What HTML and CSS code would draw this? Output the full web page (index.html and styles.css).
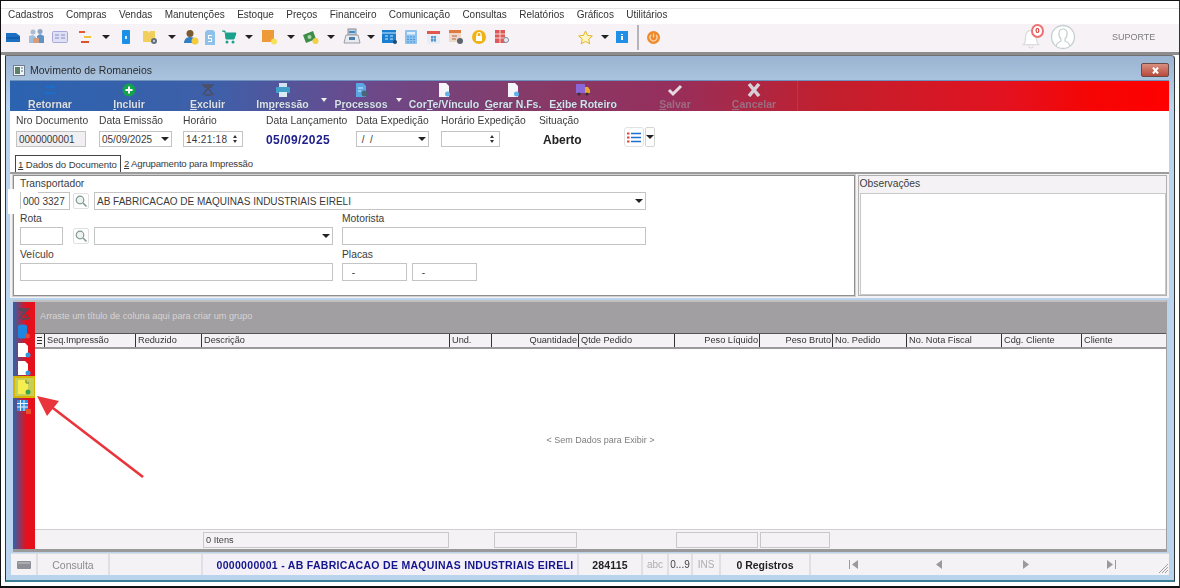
FILE: index.html
```html
<!DOCTYPE html>
<html lang="pt-BR">
<head>
    <meta charset="UTF-8">
    <title>Movimento de Romaneios</title>
    <link rel="stylesheet" href="styles.css">
</head>
<body>
<div class="screen">
    <nav class="menu">
        <span>Cadastros</span><span>Compras</span><span>Vendas</span><span>Manutenções</span><span>Estoque</span><span>Preços</span><span>Financeiro</span><span>Comunicação</span><span>Consultas</span><span>Relatórios</span><span>Gráficos</span><span>Utilitários</span>
    </nav>

    <div class="toolbar">
        <i class="tb"><svg width="16" height="16" viewBox="0 0 16 16"><path d="M-3 4h13l4 3v6H-3z" fill="#1b70c4"/><path d="M-3 9h17" stroke="#0d4f96"/></svg></i>
        <i class="tb"><svg width="18" height="18" viewBox="0 0 18 18"><circle cx="5" cy="4" r="2.5" fill="#a9bcd2"/><circle cx="12" cy="3.5" r="2.5" fill="#8aa6c4"/><path d="M1 15V8l4-1 3 2v6z" fill="#9fc0dd"/><path d="M9 15V8l3-2 4 2v7z" fill="#5e93c8"/><rect x="5" y="10" width="6" height="5" fill="#d99a78"/></svg></i>
        <i class="tb"><svg width="16" height="14" viewBox="0 0 16 14"><rect x=".5" y="1.5" width="15" height="11" rx="1" fill="#dfe0f4" stroke="#a8aadc"/><path d="M3 5h4M3 8h4M9 5h4M9 8h4" stroke="#8a8cd0"/></svg></i>
        <i class="tb"><svg width="14" height="16" viewBox="0 0 14 16"><path d="M1 2h6v2H1z" fill="#e8572e"/><path d="M6 7h7v2H6z" fill="#f1c232"/><path d="M3 12h8v2H3z" fill="#d9542a"/></svg></i>
        <i class="tb caret"></i>
        <i class="tb"><svg width="10" height="16" viewBox="0 0 10 16"><rect x="1" y="1" width="8" height="14" rx="1" fill="#1c8fe6"/><path d="M4 7h2v3H4z" fill="#d5ecff"/></svg></i>
        <i class="tb"><svg width="18" height="16" viewBox="0 0 18 16"><path d="M2 2h5l1 2 1-2h5v11H2z" fill="#f0cf5e"/><circle cx="13" cy="12" r="3" fill="#62707e"/><circle cx="13" cy="12" r="1" fill="#dfe5ea"/></svg></i>
        <i class="tb caret"></i>
        <i class="tb"><svg width="16" height="16" viewBox="0 0 16 16"><circle cx="7" cy="4.5" r="3.5" fill="#7a5a32"/><path d="M1 14c0-4 3-6 6-6s5 1 5 3v3z" fill="#2f7fc2"/><circle cx="12" cy="12" r="3.5" fill="#f3cc3e"/></svg></i>
        <i class="tb"><svg width="14" height="17" viewBox="0 0 14 17"><path d="M2 3l2-2h6l2 2v13H2z" fill="#8fc1ea"/><path d="M5 6h4v1H6v2h3v4H5v-1h3v-2H5z" fill="#fff"/></svg></i>
        <i class="tb"><svg width="17" height="16" viewBox="0 0 17 16"><path d="M1 2h3l1 8h8l2-6H5" fill="#1aa28d" stroke="#1aa28d"/><circle cx="6" cy="13" r="1.5" fill="#1aa28d"/><circle cx="12" cy="13" r="1.5" fill="#1aa28d"/></svg></i>
        <i class="tb caret"></i>
        <i class="tb"><svg width="17" height="16" viewBox="0 0 17 16"><rect x="1" y="1" width="12" height="12" fill="#ee9a36"/><circle cx="13" cy="12.500" r="3" fill="#f5e15a"/></svg></i>
        <i class="tb caret"></i>
        <i class="tb"><svg width="18" height="16" viewBox="0 0 18 16"><path d="M1 6l10-4 3 8-10 4z" fill="#3f8c4a"/><circle cx="7.500" cy="8" r="2" fill="#a6d9a4"/><circle cx="13.500" cy="12" r="3" fill="#f0d044"/></svg></i>
        <i class="tb caret"></i>
        <i class="tb"><svg width="18" height="18" viewBox="0 0 18 18"><rect x="5" y="1" width="8" height="6" fill="#c9ced4" stroke="#8a929c"/><path d="M3 7h12l2 8H1z" fill="#e8eaee" stroke="#98a0aa"/><rect x="6" y="3" width="6" height="2" fill="#3d8fd0"/><rect x="6" y="9" width="6" height="3" fill="#4b7ea8"/></svg></i>
        <i class="tb caret"></i>
        <i class="tb"><svg width="17" height="16" viewBox="0 0 17 16"><rect x="1" y="1" width="14" height="13" fill="#1b7fd0"/><path d="M1 4h14M4 7h3M9 7h3M4 10h3M9 10h3" stroke="#cfe8fb"/><circle cx="14" cy="13" r="2" fill="#1d4a70"/></svg></i>
        <i class="tb"><svg width="14" height="16" viewBox="0 0 14 16"><rect x="1" y="1" width="12" height="14" rx="1" fill="#8fc3ee"/><rect x="3" y="3" width="8" height="2.500" fill="#dff0fc"/><path d="M3 8h8M3 10.500h8M3 13h8" stroke="#4d97d6" stroke-dasharray="2 1"/></svg></i>
        <i class="tb"><svg width="15" height="15" viewBox="0 0 15 15"><rect x="1" y="2" width="13" height="12" fill="#e8eef5"/><rect x="1" y="1" width="13" height="3" fill="#e2574c"/><path d="M5 7h5M5 10h5M6 6v6M9 6v6" stroke="#2e7dbd"/></svg></i>
        <i class="tb"><svg width="16" height="16" viewBox="0 0 16 16"><rect x="1" y="2" width="12" height="11" fill="#ecd9c8"/><rect x="1" y="1" width="12" height="3" fill="#e07a40"/><path d="M4 7h5M4 10h4" stroke="#b8604a"/><circle cx="12" cy="12" r="3" fill="#5d6670"/></svg></i>
        <i class="tb"><svg width="16" height="16" viewBox="0 0 16 16"><circle cx="8" cy="8" r="7" fill="#f1b213"/><rect x="5" y="7" width="6" height="5" fill="#fff"/><path d="M6 7V5.500a2 2 0 0 1 4 0V7" fill="none" stroke="#fff" stroke-width="1.200"/></svg></i>
        <i class="tb"><svg width="16" height="16" viewBox="0 0 16 16"><rect x="1" y="1" width="10" height="13" fill="#dc5a58"/><path d="M1 5h10M1 9h10M6 1v13" stroke="#f6d6d4"/><circle cx="12" cy="11" r="2.500" fill="#e9eef4" stroke="#7c8a98"/></svg></i>
        <i class="tb-space"></i>
        <i class="tb"><svg width="15" height="15" viewBox="0 0 15 15"><path d="M7.500 1l2 4.400 4.800.5-3.600 3.200 1 4.700-4.200-2.400-4.200 2.400 1-4.700L.7 5.900l4.800-.5z" fill="#fff6c8" stroke="#e6b422"/></svg></i>
        <i class="tb caret"></i>
        <i class="tb"><svg width="12" height="12" viewBox="0 0 12 12"><rect width="12" height="12" fill="#1f8fe8"/><path d="M5 3h2v1H5zM5 5h2v4H5z" fill="#fff"/></svg></i>
        <i class="tb"><b class="tb-sep"></b></i>
        <i class="tb"><svg width="13" height="13" viewBox="0 0 13 13"><circle cx="6.500" cy="6.500" r="6.500" fill="#ee8a2a"/><path d="M6.500 2.500v4M4 4a3.500 3.500 0 1 0 5 0" fill="none" stroke="#fbe0c0" stroke-width="1.200"/></svg></i>
        <div class="tb-user">
            <svg class="bell" width="26" height="26" viewBox="0 0 24 24"><path d="M5 19c2-2 2-4 2-7 0-4 2-6 5-6s5 2 5 6c0 3 0 5 2 7z" fill="#fff" stroke="#dcdcdc" stroke-width="1.200"/><path d="M10 20a2 2 0 0 0 4 0" fill="none" stroke="#dcdcdc"/></svg>
            <span class="badge">0</span>
            <svg width="26" height="26" viewBox="0 0 26 26"><circle cx="13" cy="13" r="11.500" fill="#fff" stroke="#c5cfcf" stroke-width="1.300"/><path d="M6 22c1-4 3-4 5-5v-2c-3-3-3-10 2-10s5 7 2 10v2c2 1 4 1 5 5" fill="none" stroke="#c5cfcf" stroke-width="1.200"/></svg>
            <span class="user-name">SUPORTE</span>
        </div>
    </div>

    <section class="window">
        <header class="win-title">
            <svg width="12" height="11" viewBox="0 0 12 11"><rect x=".5" y=".5" width="11" height="10" fill="#f0f3f7" stroke="#6f7f8f"/><rect x="2" y="2" width="5" height="7" fill="#5d7f68"/><path d="M8 3h2M8 6h2" stroke="#5d6f80"/></svg>
            <span>Movimento de Romaneios</span>
            <button class="win-close"><svg width="11" height="7" viewBox="0 0 11 7"><path d="M3 .5l5 6M8 .5l-5 6" stroke="#fff" stroke-width="2"/></svg></button>
        </header>

        <div class="ribbon">
            <button class="rb"><svg width="18" height="14" viewBox="0 0 18 14"><path d="M4 4h9l-2-2M14 10H5l2 2" fill="none" stroke="#1e6cc8" stroke-width="2"/></svg><span><u>R</u>etornar</span></button>
            <button class="rb"><svg width="16" height="14" viewBox="0 0 16 14"><circle cx="8" cy="7" r="6.500" fill="#12a34c"/><path d="M8 3.500v7M4.500 7h7" stroke="#fff" stroke-width="2"/></svg><span><u>I</u>ncluir</span></button>
            <button class="rb"><svg width="16" height="14" viewBox="0 0 16 14"><path d="M2 2h12M4 2l1 2h6l1-2M3 12l5-7 5 7M5 12h6" fill="none" stroke="#4d4d5e" stroke-width="1.500"/></svg><span><u>E</u>xcluir</span></button>
            <button class="rb"><svg width="16" height="14" viewBox="0 0 16 14"><rect x="4" y="0" width="8" height="4" fill="#cfe4f0"/><rect x="1" y="4" width="14" height="6" fill="#3f9fc8"/><rect x="4" y="9" width="8" height="5" fill="#dbe9f2"/></svg><span>Im<u>p</u>ressão</span></button>
            <span class="rb-caret"></span>
            <button class="rb"><svg width="14" height="14" viewBox="0 0 14 14"><path d="M2 0h7l3 3v11H2z" fill="#5aa7e6"/><circle cx="10.500" cy="10.500" r="3" fill="#4a6678"/><path d="M4 5h5M4 8h3" stroke="#d6ecfb"/></svg><span>P<u>r</u>ocessos</span></button>
            <span class="rb-caret"></span>
            <button class="rb"><svg width="14" height="14" viewBox="0 0 14 14"><path d="M2 0h7l3 3v11H2z" fill="#f4f4fa"/><circle cx="10.500" cy="11" r="2.500" fill="#5fb2e8"/></svg><span>Cor<u>T</u>e/Vínculo</span></button>
            <button class="rb"><svg width="14" height="14" viewBox="0 0 14 14"><path d="M2 0h7l3 3v11H2z" fill="#f4f4fa"/><circle cx="10.500" cy="11" r="2.500" fill="#5fb2e8"/></svg><span><u>G</u>erar N.Fs.</span></button>
            <button class="rb"><svg width="16" height="14" viewBox="0 0 16 14"><rect x="1" y="1" width="9" height="9" fill="#8a66d8"/><path d="M10 4h3l2 3v3h-5z" fill="#e8a82a"/><circle cx="4" cy="11" r="1.500" fill="#333"/><circle cx="12" cy="11" r="1.500" fill="#333"/></svg><span>E<u>x</u>ibe Roteiro</span></button>
            <button class="rb off"><svg width="16" height="14" viewBox="0 0 16 14"><path d="M2 7l4 4 8-8" fill="none" stroke="#e6dce0" stroke-width="3"/></svg><span><u>S</u>alvar</span></button>
            <button class="rb off"><svg width="16" height="14" viewBox="0 0 16 14"><path d="M3 1l10 12M13 1L3 13" stroke="#d8d0d8" stroke-width="3.500"/></svg><span><u>C</u>ancelar</span></button>
            <span class="rb-line"></span>
        </div>

        <div class="doc-head">
            <div class="doc-col">
                <label>Nro Documento</label>
                <div class="field readonly">0000000001</div>
            </div>
            <div class="doc-col">
                <label>Data Emissão</label>
                <div class="field combo date">05/09/2025<i class="drop"></i></div>
            </div>
            <div class="doc-col">
                <label>Horário</label>
                <div class="field spin time">14:21:18<i class="spinner"></i></div>
            </div>
            <div class="doc-col">
                <label>Data Lançamento</label>
                <div class="doc-date">05/09/2025</div>
            </div>
            <div class="doc-col">
                <label>Data Expedição</label>
                <div class="field combo date">&nbsp;/ &nbsp;/<i class="drop"></i></div>
            </div>
            <div class="doc-col">
                <label>Horário Expedição</label>
                <div class="field spin time-exp"><i class="spinner"></i></div>
            </div>
            <div class="doc-col">
                <label>Situação</label>
                <div class="doc-status">Aberto</div>
            </div>
            <div class="doc-tools">
                <button class="list-btn"><svg width="14" height="11" viewBox="0 0 14 11"><path d="M4 1.500h10M4 5.500h10M4 9.500h10" stroke="#1b6fd0" stroke-width="1.500"/><path d="M0 1.500h2.500M0 5.500h2.500M0 9.500h2.500" stroke="#e2453a" stroke-width="1.800"/></svg></button>
                <button class="caret-btn"><i class="drop"></i></button>
            </div>
        </div>

        <div class="tabs">
            <div class="tab active"><u>1</u> Dados do Documento</div>
            <div class="tab second"><u>2</u> Agrupamento para Impressão</div>
        </div>

        <div class="panels">
            <div class="panel-main">
                <label>Transportador</label>
                <div class="row">
                    <div class="field code"><span>000 3327</span></div>
                    <button class="lookup"><svg width="12" height="12" viewBox="0 0 12 12"><circle cx="5" cy="5" r="3.800" fill="#eef2f0" stroke="#7f9a94" stroke-width="1.200"/><path d="M8 8l3.500 3.500" stroke="#7f9a94" stroke-width="1.500"/></svg></button>
                    <div class="field combo transp">AB FABRICACAO DE MAQUINAS INDUSTRIAIS EIRELI<i class="drop"></i></div>
                </div>
                <div class="two-cols">
                    <div>
                        <label>Rota</label>
                        <div class="row">
                            <div class="field rota"></div>
                            <button class="lookup far"><svg width="12" height="12" viewBox="0 0 12 12"><circle cx="5" cy="5" r="3.800" fill="#eef2f0" stroke="#7f9a94" stroke-width="1.200"/><path d="M8 8l3.500 3.500" stroke="#7f9a94" stroke-width="1.500"/></svg></button>
                            <div class="field combo rota-name"><i class="drop"></i></div>
                        </div>
                    </div>
                    <div>
                        <label>Motorista</label>
                        <div class="field"></div>
                    </div>
                    <div>
                        <label>Veículo</label>
                        <div class="field"></div>
                    </div>
                    <div>
                        <label>Placas</label>
                        <div class="row placas">
                            <div class="field placa">&nbsp;-</div>
                            <div class="field placa">&nbsp;-</div>
                        </div>
                    </div>
                </div>
                <div class="glitch"></div>
            </div>
            <div class="panel-obs">
                <label>Observações</label>
                <div class="obs-box"></div>
            </div>
        </div>

        <div class="grid-box">
            <aside class="side">
                <i class="side-btn"><svg width="14" height="12" viewBox="0 0 14 12"><path d="M1 1h12M3 1l1 2h6l1-2M2 11l5-7 5 7M4 11h6" fill="none" stroke="#4d4d5e" stroke-width="1.300"/></svg></i>
                <i class="side-btn"><svg width="14" height="16" viewBox="0 0 14 16"><path d="M1 2c0-2 9-2 9 0v11c0 2-9 2-9 0z" fill="#1c86e0"/><circle cx="10.500" cy="12" r="2.500" fill="#e2483e"/></svg></i>
                <i class="side-btn"><svg width="14" height="16" viewBox="0 0 14 16"><path d="M1 1h7l3 3v11H1z" fill="#fff"/><circle cx="11" cy="13" r="2.500" fill="#2f97e0"/></svg></i>
                <i class="side-btn"><svg width="14" height="16" viewBox="0 0 14 16"><path d="M1 1h7l3 3v11H1z" fill="#fff"/><circle cx="11" cy="13" r="2.500" fill="#2f97e0"/></svg></i>
                <i class="side-btn marked"><svg width="14" height="16" viewBox="0 0 14 16"><path d="M1 1h7l3 3v11H1z" fill="#f5ee4e"/><path d="M9 1v3h3" fill="none" stroke="#5c7f3a"/><circle cx="11" cy="13" r="2.500" fill="#3aa54a"/></svg></i>
                <i class="side-btn"><svg width="16" height="16" viewBox="0 0 16 16"><rect x="1" y="1" width="11" height="11" fill="#2f8fe0"/><path d="M1 4.500h11M1 8h11M4.500 1v11M8 1v11" stroke="#e6f3fd"/><rect x="10" y="10" width="5" height="5" fill="#e8502e"/></svg></i>
            </aside>
            <div class="grid-main">
                <div class="group-panel">Arraste um título de coluna aqui para criar um grupo</div>
                <div class="grid-head">
                    <span class="col-ind"><svg width="5" height="7" viewBox="0 0 5 7"><path d="M0 .5h5M0 3.500h5M0 6.500h5" stroke="#333"/></svg></span>
                    <span>Seq.Impressão</span>
                    <span>Reduzido</span>
                    <span>Descrição</span>
                    <span>Und.</span>
                    <span class="num">Quantidade</span>
                    <span>Qtde Pedido</span>
                    <span class="num">Peso Líquido</span>
                    <span class="num">Peso Bruto</span>
                    <span>No. Pedido</span>
                    <span>No. Nota Fiscal</span>
                    <span>Cdg. Cliente</span>
                    <span>Cliente</span>
                </div>
                <div class="grid-body">&lt; Sem Dados para Exibir &gt;</div>
                <div class="grid-foot">
                    <span class="foot-box items">0 Itens</span>
                    <span class="foot-box qtd"></span>
                    <span class="foot-box liq"></span>
                    <span class="foot-box bruto"></span>
                </div>
            </div>
        </div>

        <footer class="status">
            <span class="st st-kb"><svg width="14" height="8" viewBox="0 0 14 8"><rect width="14" height="8" rx="1" fill="#8e8e96"/><path d="M1 2h12" stroke="#c8c8ce"/></svg></span>
            <span class="st st-mode">Consulta</span>
            <span class="st st-blank"></span>
            <span class="st st-doc">0000000001 - AB FABRICACAO DE MAQUINAS INDUSTRIAIS EIRELI</span>
            <span class="st st-num">284115</span>
            <span class="st st-abc">abc</span>
            <span class="st st-09">0...9</span>
            <span class="st st-ins">INS</span>
            <span class="st st-reg">0 Registros</span>
            <span class="st st-nav">
                <svg width="9" height="9" viewBox="0 0 9 9"><path d="M0 0h1v9H0zM9 0v9L3 4.500z" fill="#9a9a9a"/></svg>
                <svg width="9" height="9" viewBox="0 0 9 9"><path d="M7 0v9L1 4.500z" fill="#9a9a9a"/></svg>
                <svg width="9" height="9" viewBox="0 0 9 9"><path d="M2 0v9l6-4.500z" fill="#9a9a9a"/></svg>
                <svg width="9" height="9" viewBox="0 0 9 9"><path d="M0 0v9l6-4.500zM8 0h1v9H8z" fill="#9a9a9a"/></svg>
            </span>
            <svg class="grip" width="9" height="9" viewBox="0 0 9 9"><path d="M0 9l9-9M3 9l6-6M6 9l3-3" stroke="#a0a0a0"/></svg>
        </footer>
    </section>

    <svg class="arrow" width="120" height="90" viewBox="0 0 120 90"><path d="M108 84L14 12" stroke="#e8343a" stroke-width="2.600"/><path d="M2 3l22 5-12 15z" fill="#e8343a"/></svg>
</div>
</body>
</html>
```

FILE: styles.css
```css
* {
    box-sizing: border-box;
}

body {
    margin: 0;
    background-color: white;
    font-family: "Liberation Sans", Arial, sans-serif;
    font-size: 10px;
    color: #333;
}

i {
    font-style: normal;
}

u {
    text-decoration-thickness: 1px;
}

button {
    font: inherit;
    padding: 0;
    border: none;
    background: none;
}

label {
    display: block;
    height: 12px;
    line-height: 12px;
    font-size: 10.3px;
    color: #3c3c3c;
}

.screen {
    position: relative;
    width: 1180px;
    height: 588px;
    padding-top: 7px;
    border-top: 1px solid #111;
    border-left: 1px solid #111;
    border-right: 1px solid #333;
    border-bottom: 2px solid #111;
    overflow: hidden;
    filter: blur(0.45px);
}

/* menu */
.menu {
    display: flex;
    gap: 12.4px;
    height: 16px;
    padding: 0 0 4px 7px;
    align-items: center;
    border-top: 1px solid #e4e4e4;
    color: #333;
}

/* toolbar */
.toolbar {
    display: grid;
    grid-template-columns: 23px 23px 24px 25px 18px 22px 25px 19px 19px 20px 19px 20px 21px 21px 20px 20px 21px 18px 19px 23px 23px 22px 23px 24px 60px 22px 18px 16px 16px 14px 1fr;
    align-items: center;
    height: 31px;
    padding: 0 0 2px 1px;
    background-color: #f6f2f6;
    border-bottom: 3px solid #8d8d8d;
}

.tb {
    display: flex;
    align-items: center;
    justify-content: center;
    overflow: visible;
}

.caret::after,
.drop::after {
    content: "";
    border-left: 4px solid transparent;
    border-right: 4px solid transparent;
    border-top: 4px solid #222;
}

.tb-sep {
    width: 2px;
    height: 25px;
    background-color: #b4b4b8;
}

.tb-user {
    position: relative;
    display: flex;
    align-items: center;
    justify-content: flex-end;
    gap: 2px;
    padding-right: 5px;
}

.bell {
    margin: 0 4px 0 0;
}

.badge {
    position: absolute;
    right: 135px;
    top: 0;
    width: 13px;
    height: 14px;
    border: 2px solid #f07070;
    border-radius: 50%;
    background-color: white;
    color: #d83030;
    font-size: 8px;
    font-weight: bold;
    line-height: 10px;
    text-align: center;
}

.user-name {
    width: 96px;
    padding-left: 34px;
    font-size: 9px;
    color: #7d7d7d;
}

/* window */
.window {
    display: flex;
    flex-direction: column;
    height: 527px;
    margin-left: 4px;
    width: 1170px;
    padding: 0 5px 0 4px;
    border: 1px solid #333;
    border-top-right-radius: 4px;
    border-top-color: #707070;
    border-bottom: 2px solid #3a7f96;
    background: linear-gradient(#9ab4d1, #bad4ee 50px, #bad4ee);
}

.win-title {
    display: flex;
    align-items: center;
    gap: 5px;
    height: 24px;
    flex: none;
    padding: 4px 0 0 3px;
    font-size: 10.500px;
    color: #2c2c2c;
}

.win-close {
    display: flex;
    align-items: center;
    justify-content: center;
    width: 28px;
    height: 14px;
    margin-left: auto;
    border: 1px solid #6a4a4a;
    border-radius: 2px;
    background: linear-gradient(#d98f7f, #b84a3c);
}

/* ribbon */
.ribbon {
    display: grid;
    grid-template-columns: 76px 82px 75px 75px 8px 66px 10px 80px 58px 82px 102px 56px 15px 1fr;
    flex: none;
    height: 31px;
    padding-left: 2px;
    border-top: 1px solid #6f8fbc;
    background: linear-gradient(90deg, #2b63b0 0%, #3f5fa8 18%, #6a4a8c 30%, #863a68 45%, #962f5c 57%, #c0202f 70%, #e3121f 86%, #f50505 93%, #ff0000 100%);
}

.rb {
    display: flex;
    flex-direction: column;
    align-items: center;
    gap: 1px;
    padding-top: 2px;
    font-size: 10.500px;
    font-weight: bold;
    color: #d9e0ea;
    text-shadow: 0 0 1px #36405c;
    white-space: nowrap;
}

.rb.off {
    color: #9c6d80;
    text-shadow: none;
}

.rb-caret {
    align-self: center;
    justify-self: center;
    margin-top: 8px;
    border-left: 3.500px solid transparent;
    border-right: 3.500px solid transparent;
    border-top: 4px solid #eee;
}

.rb-line {
    width: 1px;
    background-color: #a84050;
}

.ribbon .rb-line {
    grid-column: 14;
}

/* cabeçalho do documento */
.doc-head {
    display: grid;
    grid-template-columns: 83px 84px 83px 90px 85px 98px 85px 1fr;
    flex: none;
    height: 44px;
    padding: 4px 0 0 6px;
    background-color: white;
}

.doc-col label {
    margin-bottom: 4px;
}

.field {
    position: relative;
    height: 16px;
    padding: 0 2px;
    line-height: 15px;
    font-size: 10px;
    border: 1px solid #c4c4c4;
    background-color: white;
    color: #3a3a3a;
    white-space: nowrap;
}

.field.readonly {
    width: 70px;
    background-color: #f1eff1;
}

.date {
    width: 73px;
}

.time {
    width: 60px;
    letter-spacing: 0.3px;
}

.time-exp {
    width: 59px;
}

.drop,
.spinner {
    position: absolute;
    top: 0;
    right: 0;
    bottom: 0;
    width: 13px;
    display: flex;
    align-items: center;
    justify-content: center;
}

.spinner::before,
.spinner::after {
    content: "";
    position: absolute;
    left: 4px;
    border-left: 2.500px solid transparent;
    border-right: 2.500px solid transparent;
}

.spinner::before {
    top: 3px;
    border-bottom: 3px solid #333;
}

.spinner::after {
    bottom: 3px;
    border-top: 3px solid #333;
}

.doc-date {
    padding-top: 2px;
    font-size: 12px;
    font-weight: bold;
    color: #20208c;
    letter-spacing: 0.4px;
}

.doc-status {
    padding: 2px 0 0 4px;
    font-size: 12px;
    font-weight: bold;
    color: #222;
}

.doc-tools {
    display: flex;
    gap: 1px;
    padding-top: 12px;
}

.list-btn {
    display: flex;
    align-items: center;
    justify-content: center;
    width: 20px;
    height: 20px;
    border: 1px solid #e2e2e2;
    border-radius: 3px;
}

.caret-btn {
    position: relative;
    width: 10px;
    height: 20px;
    border: 1px solid #d4d4d4;
    border-radius: 2px;
}

.caret-btn .drop {
    width: auto;
    left: 0;
}

/* abas */
.tabs {
    display: flex;
    flex: none;
    height: 19px;
    padding-left: 5px;
    border-bottom: 2px solid #9c9c9c;
    background-color: white;
    font-size: 9.600px;
}

.tab {
    height: 17px;
    padding: 2px 2px 0;
    line-height: 13px;
    letter-spacing: -0.1px;
    white-space: nowrap;
    color: #3a3a3a;
}

.tab.second {
    letter-spacing: -0.2px;
}

.tab.active {
    width: 106px;
    margin-right: 1px;
    border: 1px solid #444;
    border-bottom: none;
}

/* painéis */
.panels {
    display: flex;
    flex: none;
    gap: 3px;
    height: 124px;
    padding: 1px 2px 2px 3px;
    background-color: #f5f2f6;
}

.panel-main {
    position: relative;
    width: 843px;
    padding: 2px 0 0 6px;
    border: 1px solid #8f8f8f;
    outline: 1px solid #d0d0d0;
    background-color: white;
}

.panel-main > label {
    margin-bottom: 2px;
}

.row {
    display: flex;
    align-items: center;
}

.panel-main .field {
    height: 18px;
    line-height: 17px;
}

.code {
    width: 50px;
    flex: none;
}

.code span {
    position: relative;
    z-index: 2;
}

.lookup {
    display: flex;
    align-items: center;
    justify-content: center;
    flex: none;
    width: 16px;
    height: 16px;
    margin: 0 5px 0 3px;
    border: 1px solid #e0e0e0;
    border-radius: 2px;
}

.lookup.far {
    margin-left: 10px;
}

.transp {
    width: 552px;
}

.two-cols {
    display: grid;
    grid-template-columns: 313px 304px;
    column-gap: 9px;
    row-gap: 4px;
    margin-top: 3px;
}

.two-cols label {
    margin-bottom: 2px;
}

.rota {
    width: 43px;
    flex: none;
}

.rota-name {
    width: 239px;
    flex: none;
}

.placas {
    gap: 5px;
}

.placa {
    width: 65px;
    padding-left: 6px;
}

/* faixa branca que aparece sobre o campo do transportador */
.glitch {
    position: absolute;
    z-index: 1;
    left: -6px;
    top: 13px;
    width: 30px;
    height: 25px;
    background-color: white;
    border-right: 1px solid white;
}

.glitch::after {
    content: "";
    position: absolute;
    left: 12px;
    top: 3px;
    width: 1px;
    height: 17px;
    background-color: #c4c4c4;
}

.panel-obs {
    display: flex;
    flex-direction: column;
    width: 310px;
    padding-top: 2px;
    border: 1px solid #b0b0b0;
    background-color: #f5f2f6;
}

.panel-obs label {
    padding-left: 1px;
    margin-bottom: 3px;
}

.obs-box {
    flex: 1;
    margin-left: 1px;
    border: 1px solid #c8c8c8;
    background-color: white;
}

/* grade */
.grid-box {
    display: flex;
    flex: none;
    height: 252px;
    margin: 2px 2px 0 3px;
    border-right: 1px solid #a0a0a0;
    border-top: 2px solid #c0c0c0;
    border-bottom: 3px solid #9a9a9a;
}

.side {
    display: flex;
    flex-direction: column;
    align-items: center;
    flex: none;
    width: 22px;
    padding-top: 3px;
    background: linear-gradient(90deg, #2a63b0, #e5101c 60%);
}

.side-btn {
    display: flex;
    align-items: center;
    justify-content: center;
    flex: none;
    width: 23px;
    height: 18px;
}

.side-btn.marked {
    height: 22px;
    margin-top: -1px;
    background-color: #c6cf58;
    border: 2px solid #d8b400;
}

.grid-main {
    display: flex;
    flex-direction: column;
    flex: 1;
    min-width: 0;
}

.group-panel {
    flex: none;
    height: 31px;
    padding: 9px 0 0 5px;
    background-color: #a19fa1;
    color: #d6d4d6;
    font-size: 9.200px;
}

.grid-head {
    display: grid;
    grid-template-columns: 10px 91px 66px 248px 42px 87px 96px 85px 73px 74px 95px 80px 1fr;
    flex: none;
    height: 16px;
    background-color: #f5f2f6;
    border-top: 1px solid #555;
    border-bottom: 2px solid #9a9a9a;
    font-size: 9.200px;
    color: #333;
}

.grid-head span {
    padding: 0 1px 0 2px;
    line-height: 13px;
    border-right: 1px solid #333;
    white-space: nowrap;
}

.grid-head span:last-child {
    border-right: none;
}

.grid-head .num {
    text-align: right;
}

.grid-head .col-ind {
    display: flex;
    align-items: center;
    justify-content: center;
    padding: 0;
}

.grid-body {
    display: flex;
    align-items: center;
    justify-content: center;
    flex: 1;
    padding-top: 1px;
    background-color: white;
    border-bottom: 1px solid #d0d0d0;
    font-size: 9px;
    color: #7c7c7c;
}

.grid-foot {
    display: grid;
    grid-template-columns: 168px 246px 45px 83px 99px 82px 72px;
    flex: none;
    height: 19px;
    padding-top: 2px;
    background-color: #f5f2f6;
}

.foot-box {
    height: 16px;
    padding-left: 2px;
    line-height: 15px;
    border: 1px solid #c8c8c8;
    font-size: 9.200px;
    color: #444;
}

.items {
    grid-column: 2;
}

.qtd {
    grid-column: 4;
}

.liq {
    grid-column: 6;
    width: 82px;
}

.bruto {
    grid-column: 7;
    margin-left: 2px;
}

/* barra de status */
.status {
    position: relative;
    display: flex;
    flex: none;
    align-items: stretch;
    height: 22px;
    margin: 1px 0 0 1px;
    background-color: #f5f2f6;
    border-top: 1px solid #dcdcdc;
}

.st {
    display: flex;
    align-items: center;
    justify-content: center;
    flex: none;
    height: 100%;
    border-right: 2px solid #e0e0e4;
    font-size: 10px;
}

.st-kb {
    width: 27px;
}

.st-mode {
    width: 72px;
    color: #8c8c8c;
    font-size: 10.500px;
}

.st-blank {
    width: 93px;
}

.st-doc {
    width: 376px;
    padding-left: 10px;
    color: #14148c;
    font-weight: bold;
    font-size: 10.500px;
    letter-spacing: 0.3px;
    background-color: #f3f1f7;
}

.st-num {
    width: 64px;
    font-weight: bold;
    color: #222;
    font-size: 10.500px;
    letter-spacing: 0.2px;
}

.st-abc {
    width: 26px;
    color: #aeaeae;
}

.st-ins {
    width: 28px;
    color: #aeaeae;
}

.st-09 {
    width: 24px;
    color: #444;
}

.st-reg {
    width: 90px;
    font-weight: bold;
    color: #222;
    font-size: 10.500px;
}

.st-nav {
    flex: 1;
    justify-content: flex-start;
    gap: 77px;
    padding-left: 38px;
    border-right: none;
}

.grip {
    position: absolute;
    right: 1px;
    bottom: 2px;
}

.arrow {
    position: absolute;
    left: 34px;
    top: 392px;
}
```
